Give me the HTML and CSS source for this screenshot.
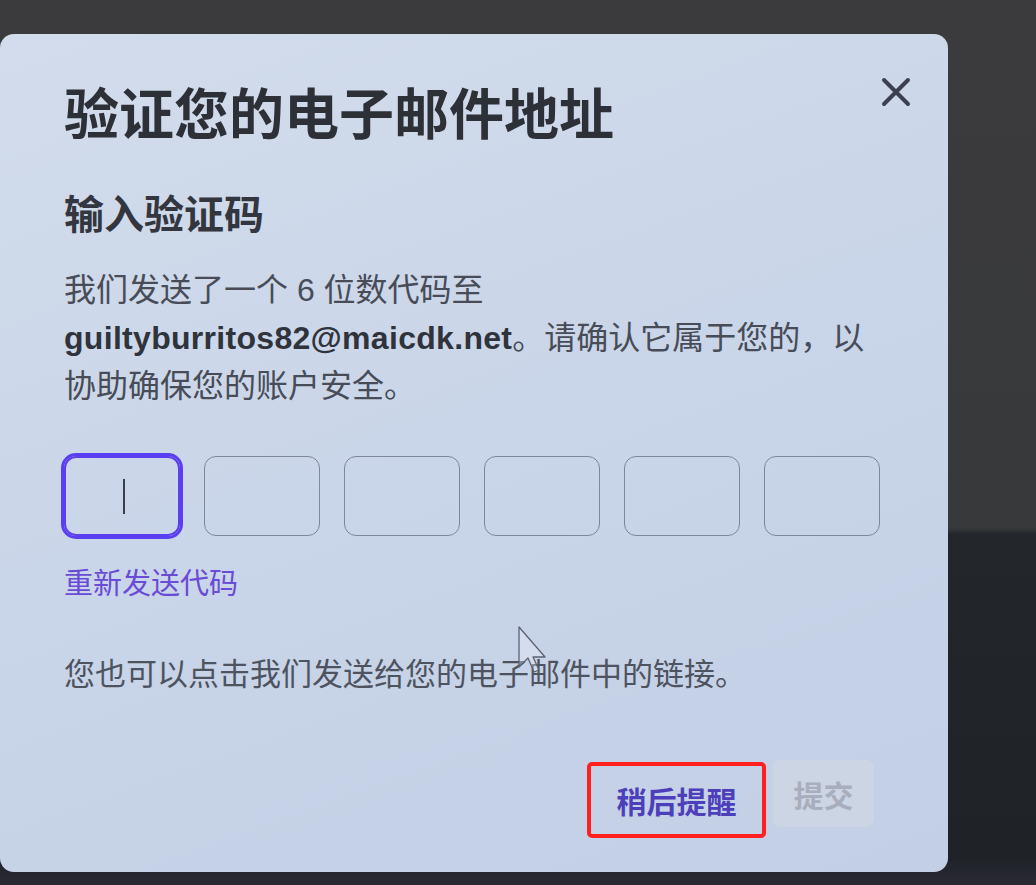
FILE: index.html
```html
<!DOCTYPE html>
<html lang="zh-CN">
<head>
<meta charset="utf-8">
<title>验证您的电子邮件地址</title>
<link rel="stylesheet" href="styles.css">
</head>
<body>
<div class="modal">
  <div class="head">
    <h1 class="title">验证您的电子邮件地址</h1>
    <button class="close" aria-label="关闭">
      <svg width="30" height="30" viewBox="0 0 30 30"><path d="M3 3 L27 27 M27 3 L3 27" stroke="#3b4150" stroke-width="4" stroke-linecap="round" fill="none"/></svg>
    </button>
  </div>
  <h2 class="subtitle">输入验证码</h2>
  <p class="desc">我们发送了一个 6 位数代码至<b class="email">guiltyburritos82@maicdk.net</b>。请确认它属于您的，以协助确保您的账户安全。</p>
  <div class="otp">
    <div class="box focus"><span class="caret"></span></div>
    <div class="box"></div>
    <div class="box"></div>
    <div class="box"></div>
    <div class="box"></div>
    <div class="box"></div>
  </div>
  <a class="resend">重新发送代码</a>
  <p class="note">您也可以点击我们发送给您的电子邮件中的链接。</p>
  <div class="footer">
    <button class="btn later">稍后提醒</button>
    <button class="btn submit" disabled>提交</button>
  </div>
  <svg class="pointer" width="30" height="48" viewBox="0 0 30 48"><path d="M1 1 L1 41 L10 32 L16 46 L21 44 L15 31 L27 31 Z" fill="rgba(235,240,248,0.35)" stroke="#5c6272" stroke-width="1.3" stroke-linejoin="round"/></svg>
</div>
</body>
</html>
```
FILE: styles.css
```css
html, body {
  margin: 0;
  padding: 0;
}
body {
  width: 1036px;
  height: 885px;
  overflow: hidden;
  box-sizing: border-box;
  padding-top: 34px;
  background: linear-gradient(to bottom, #3b3b3d 0px, #38393b 528px, #23272c 534px, #1f2328 860px, #2a2a33 885px);
  font-family: "Noto Sans CJK SC", sans-serif;
}
.modal {
  position: relative;
  width: 948px;
  height: 838px;
  box-sizing: border-box;
  padding: 44px 64px 34px 64px;
  border-radius: 14px;
  background: linear-gradient(160deg, #d2dcec 0%, #c9d5e8 50%, #c2cfe5 100%);
  display: flex;
  flex-direction: column;
}
.head {
  display: flex;
  justify-content: space-between;
  align-items: flex-start;
}
.title {
  margin: 0;
  font-size: 55px;
  line-height: 64px;
  font-weight: 700;
  color: #2d3037;
}
.close {
  border: 0;
  padding: 0;
  background: none;
  width: 30px;
  height: 30px;
  margin-top: -1px;
  margin-right: -27px;
  display: block;
}
.close svg { display: block; }
.subtitle {
  margin: 46px 0 0 0;
  font-size: 40px;
  line-height: 48px;
  font-weight: 700;
  color: #33363e;
}
.desc {
  margin: 30px 0 0 0;
  font-family: "Liberation Sans", "Noto Sans CJK SC", sans-serif;
  font-size: 32px;
  line-height: 48px;
  color: #474c57;
}
.email {
  font-weight: 700;
  letter-spacing: 0.3px;
  color: #2f333b;
}
.otp {
  margin-top: 46px;
  display: flex;
  gap: 24px;
}
.box {
  width: 116px;
  height: 80px;
  box-sizing: border-box;
  border: 1.5px solid #7f8798;
  border-radius: 12px;
  display: flex;
  align-items: center;
  justify-content: center;
}
.box.focus {
  border: 2px solid #5a3ef2;
  box-shadow: 0 0 0 3px #5a3ef2;
}
.caret {
  width: 2px;
  height: 35px;
  margin-left: 3px;
  background: #3a3f4a;
}
.resend {
  margin-top: 25px;
  font-size: 29px;
  line-height: 40px;
  color: #6a4bd6;
  align-self: flex-start;
}
.note {
  margin: 51px 0 0 0;
  font-size: 31px;
  line-height: 40px;
  color: #4e5360;
}
.footer {
  margin-top: auto;
  display: flex;
  justify-content: flex-end;
  align-items: flex-start;
  margin-right: 10px;
}
.btn {
  font-family: "Noto Sans CJK SC", sans-serif;
  font-size: 30px;
  font-weight: 700;
  background: none;
  padding: 0;
  display: flex;
  align-items: center;
  justify-content: center;
  box-sizing: border-box;
}
.later {
  width: 179px;
  height: 76px;
  margin-top: 2px;
  border: 4px solid #ff1f1f;
  border-radius: 5px;
  color: #4d3fba;
}
.submit {
  width: 101px;
  height: 67px;
  margin-left: 7px;
  border: 0;
  border-radius: 8px;
  background: #ccd5e4;
  color: #a7aebd;
}
.pointer {
  position: absolute;
  left: 518px;
  top: 592px;
}
```
